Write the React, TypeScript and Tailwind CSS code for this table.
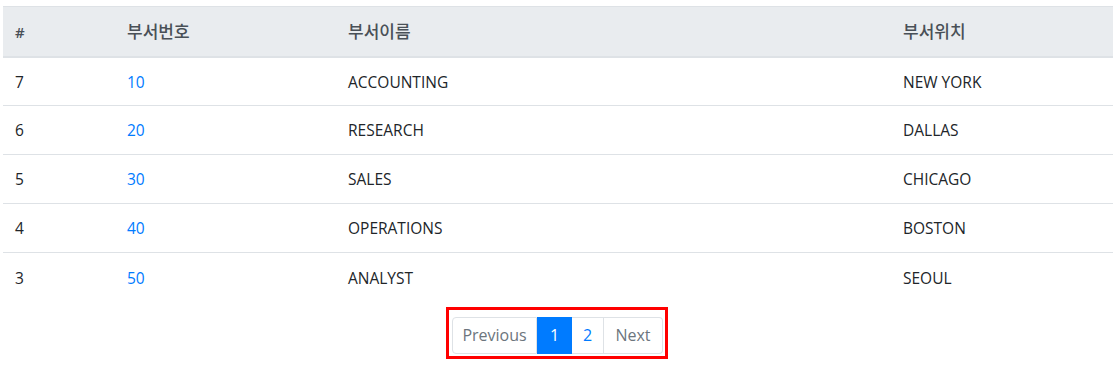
import React from "react";

interface Dept {
  seq: number;
  deptno: number;
  dname: string;
  loc: string;
}

const depts: Dept[] = [
  { seq: 7, deptno: 10, dname: "ACCOUNTING", loc: "NEW YORK" },
  { seq: 6, deptno: 20, dname: "RESEARCH", loc: "DALLAS" },
  { seq: 5, deptno: 30, dname: "SALES", loc: "CHICAGO" },
  { seq: 4, deptno: 40, dname: "OPERATIONS", loc: "BOSTON" },
  { seq: 3, deptno: 50, dname: "ANALYST", loc: "SEOUL" },
];

const font = { fontFamily: '"Open Sans", "Noto Sans CJK KR", sans-serif' };

const App = () => {
  return (
    <div className="min-h-screen bg-white pt-[6px] pl-[3px] text-[15.5px] text-[#212529]" style={font}>
      <table className="w-[1110px] border-collapse">
        <thead>
          <tr className="h-[50px] bg-[#e9ecef] text-[#495057] text-[17px] border-t border-[#dee2e6] border-b-2">
            <th className="w-[112px] pl-[12px] pt-[1px] text-left text-[15px] font-semibold">#</th>
            <th className="w-[221px] pl-[12px] pt-[1px] text-left font-medium">부서번호</th>
            <th className="w-[555px] pl-[12px] pt-[1px] text-left font-medium">부서이름</th>
            <th className="pl-[12px] pt-[1px] text-left font-medium">부서위치</th>
          </tr>
        </thead>
        <tbody>
          {depts.map((d, i) => (
            <tr key={d.seq} className={"h-[49px] " + (i > 0 ? "border-t border-[#dee2e6]" : "")}>
              <td className="pl-[12px] pt-[2px]">{d.seq}</td>
              <td className="pl-[12px] pt-[2px] text-[#007bff]">{d.deptno}</td>
              <td className="pl-[12px] pt-[2px]">{d.dname}</td>
              <td className="pl-[12px] pt-[2px]">{d.loc}</td>
            </tr>
          ))}
        </tbody>
      </table>

      {/* Pagination */}
      <div className="flex justify-center w-[1110px] mt-[5px] pr-[2px]">
        <div className="border-[3px] border-[#ff0000] pt-[7px] pb-[2px] pl-[3px] pr-[2px]">
          <ul className="flex h-[37px] text-[16px]">
            <li className="w-[85px] flex items-center justify-center border border-[#dee2e6] rounded-l text-[#6c757d]">
              Previous
            </li>
            <li className="w-[35px] flex items-center justify-center bg-[#007bff] border border-[#007bff] text-white">
              1
            </li>
            <li className="w-[32px] flex items-center justify-center border border-l-0 border-[#dee2e6] text-[#007bff]">
              2
            </li>
            <li className="w-[59px] flex items-center justify-center border border-l-0 border-[#dee2e6] rounded-r text-[#6c757d]">
              Next
            </li>
          </ul>
        </div>
      </div>
    </div>
  );
};

export default App;
